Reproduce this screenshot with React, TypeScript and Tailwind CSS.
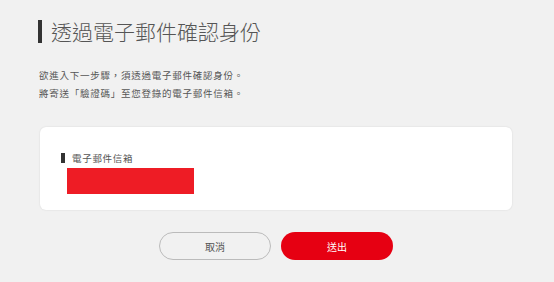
import React from 'react';

export default function App() {
  return (
    <div
      className="w-[554px] h-[282px] bg-[#f1f1f1] text-[#555] overflow-hidden"
      style={{ fontFamily: '"Noto Sans CJK TC", "Noto Sans", sans-serif' }}
    >
      <div className="pl-[38px] pt-[20px] flex items-center">
        <div className="w-[4px] h-[23px] bg-[#333]" />
        <h1 className="ml-[9px] text-[21px] leading-[23px] text-[#555] font-light">
          透過電子郵件確認身份
        </h1>
      </div>

      <div className="pl-[39px] mt-[23px] text-[9.5px] leading-[18px] tracking-[0.75px] text-[#555]">
        <p>欲進入下一步驟，須透過電子郵件確認身份。</p>
        <p>將寄送「驗證碼」至您登錄的電子郵件信箱。</p>
      </div>

      <div className="ml-[40px] mr-[42px] mt-[25px] h-[83px] bg-white rounded-[6px] shadow-[0_0_2px_rgba(0,0,0,0.12)] pl-[21px] pt-[26px]">
        <div className="flex items-center">
          <div className="w-[4px] h-[10px] bg-[#333]" />
          <span className="ml-[7px] text-[9.5px] leading-[10px] tracking-[0.7px] text-[#555]">電子郵件信箱</span>
        </div>
        <div className="ml-[6px] mt-[5px] w-[127px] h-[26px] bg-[#ee1c25]" />
      </div>

      <div className="mt-[22px] pr-[2px] flex justify-center gap-[10px]">
        <button className="w-[112px] h-[28px] rounded-full border border-[#bbb] bg-[#f1f1f1] text-[10px] text-[#555]">
          取消
        </button>
        <button className="w-[112px] h-[28px] rounded-full bg-[#e60012] text-[10px] text-white">
          送出
        </button>
      </div>
    </div>
  );
}
